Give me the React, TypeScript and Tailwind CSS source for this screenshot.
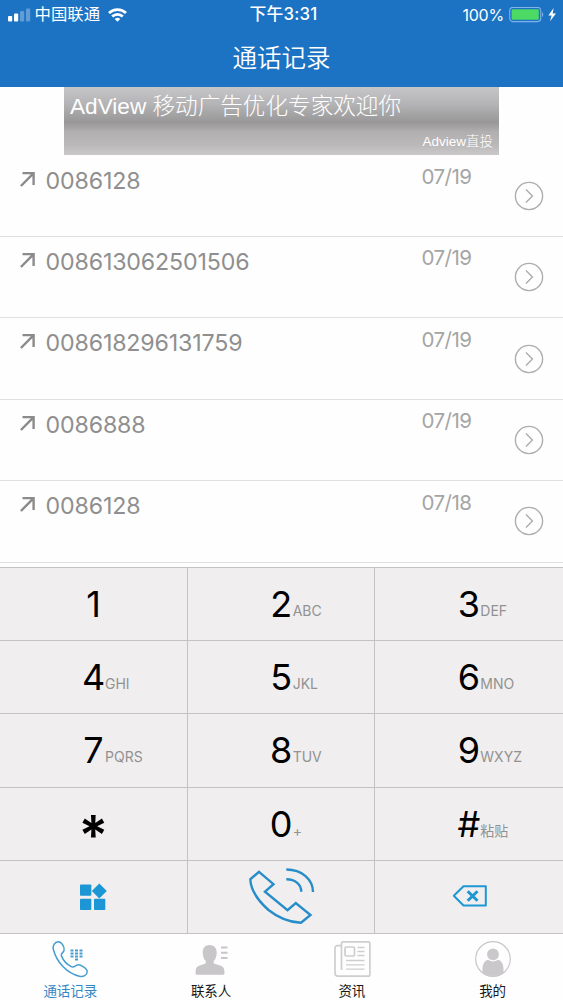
import type { ReactNode } from 'react'

interface Call {
  number: string
  date: string
}

interface Key {
  digit: string
  letters?: string
}

const CALLS: Call[] = [
  { number: '0086128', date: '07/19' },
  { number: '008613062501506', date: '07/19' },
  { number: '008618296131759', date: '07/19' },
  { number: '0086888', date: '07/19' },
  { number: '0086128', date: '07/18' },
]

const KEYS: Key[] = [
  { digit: '1' },
  { digit: '2', letters: 'ABC' },
  { digit: '3', letters: 'DEF' },
  { digit: '4', letters: 'GHI' },
  { digit: '5', letters: 'JKL' },
  { digit: '6', letters: 'MNO' },
  { digit: '7', letters: 'PQRS' },
  { digit: '8', letters: 'TUV' },
  { digit: '9', letters: 'WXYZ' },
  { digit: '*' },
  { digit: '0', letters: '+' },
  { digit: '#', letters: '粘贴' },
]

function StatusBar() {
  return (
    <div className="grid h-[29px] grid-cols-3 items-center text-[16.4px] leading-none">
      <div className="flex items-center pl-2">
        <svg className="h-3.5 w-[23px] shrink-0" viewBox="0 0 23 14" fill="#fff">
          <rect x="0" y="8" width="4.2" height="5.4" rx="1" />
          <rect x="6" y="5.5" width="4.2" height="7.9" rx="1" />
          <rect x="12" y="3" width="4.2" height="10.4" rx="1" opacity=".3" />
          <rect x="18" y="0.5" width="4.2" height="12.9" rx="1" opacity=".3" />
        </svg>
        <span className="ml-[3.5px] whitespace-nowrap">中国联通</span>
        <svg className="ml-2 h-3.5 w-[19px] shrink-0" viewBox="0 0 19 14" fill="none" stroke="#fff" strokeWidth="2.8">
          <path d="M1 5.1a12.2 12.2 0 0 1 17 0" />
          <path d="M4.2 8.6a7.6 7.6 0 0 1 10.6 0" />
          <path d="M9.5 13.8 6.7 11a4 4 0 0 1 5.6 0z" fill="#fff" stroke="none" />
        </svg>
      </div>
      <div className="pl-1 text-center text-[16.8px] font-medium tracking-[0.2px] whitespace-nowrap">下午3:31</div>
      <div className="flex items-center justify-end pr-[7px]">
        <span className="text-[16px] tracking-[-0.2px]">100%</span>
        <svg className="ml-[5px] h-4 w-[47px] shrink-0" viewBox="0 0 47 16" fill="none">
          <rect x=".7" y=".4" width="31" height="14.2" rx="3" stroke="#7db2ea" strokeWidth="1.1" />
          <rect x="2.6" y="2.2" width="27.2" height="10.6" rx="1.2" fill="#4cd964" />
          <path d="M33 5.2c1.6.5 1.6 4.1 0 4.6z" fill="#7db2ea" />
          <path d="M44.6.9 39.4 8.5h3.2l-1.6 5.8L47 6.5h-3.3z" fill="#fff" />
        </svg>
      </div>
    </div>
  )
}

function CallRow({ call }: { call: Call }) {
  return (
    <div className="flex h-[81.4px] border-b border-[#e0e0e0] pr-[19px] pl-5">
      <svg className="mt-[15px] h-4 w-4 shrink-0" viewBox="0 0 16 16" fill="none" stroke="#8b8b8b" strokeWidth="2.4">
        <path d="M2.5 2.1h11.1v12M13.4 2.3.9 15" />
      </svg>
      <span className="mt-[11px] ml-[9.5px] text-[23.2px] leading-7 font-[380] tracking-[-0.15px] text-[#8f8f8f]">
        {call.number}
      </span>
      <span className="mt-[7.5px] ml-auto text-[20.5px] leading-7 font-[380] tracking-[-0.5px] text-[#a5a5a5]">
        {call.date}
      </span>
      <svg className="ml-[42.5px] h-[30px] w-[30px] shrink-0 self-center" viewBox="0 0 30 30" fill="none" stroke="#adadad" strokeWidth="1.4">
        <circle cx="15" cy="15" r="13.6" />
        <path d="m12 8.500 6.400 6.500-6.400 6.500" />
      </svg>
    </div>
  )
}

function PadCell({ children }: { children: ReactNode }) {
  return <div className="flex border-r border-b border-[#c4c3c4] nth-[3n]:border-r-0">{children}</div>
}

function DialKey({ item }: { item: Key }) {
  if (item.digit === '*') {
    return (
      <PadCell>
        <span className="h-[72px] w-full pt-[22px] text-center text-[55px] leading-[50px] font-semibold text-black">*</span>
      </PadCell>
    )
  }
  return (
    <PadCell>
      <div className="flex w-full items-baseline pt-[14px] pl-[82px] leading-[44px]">
        <span className="w-[23px] shrink-0 text-center text-[36px] whitespace-nowrap text-black">{item.digit}</span>
        <span className="-translate-y-px text-[14px] font-[380] text-[#929292]">{item.letters}</span>
      </div>
    </PadCell>
  )
}

function Tab({ label, active, children }: { label: string; active?: boolean; children: ReactNode }) {
  return (
    <div className={`flex flex-col items-center pt-[5px] text-[13.5px] leading-5 ${active ? 'text-[#3588c5]' : 'text-[#181818]'}`}>
      <svg className="h-10 w-10" viewBox="0 0 40 40" fill="none">
        {children}
      </svg>
      <span className="mt-0.5">{label}</span>
    </div>
  )
}

export default function App() {
  return (
    <div className="flex h-[1000px] w-[563px] flex-col overflow-hidden bg-[#fefefe] font-['Inter','Noto_Sans_CJK_SC',sans-serif]">
      <header className="h-[87px] shrink-0 bg-[#1c72c3] text-white">
        <StatusBar />
        <h1 className="mt-[11px] text-center text-[24.5px] leading-9 font-[350]">通话记录</h1>
      </header>

      <div className="mx-auto flex h-[68px] w-[435px] shrink-0 flex-col justify-between bg-[linear-gradient(#c6c6c8_0%,#b4b3b5_25%,#999798_52%,#b1afb0_66%,#bab8b9_85%,#cac8c9_100%)] px-1.5 font-['Liberation_Sans','Noto_Sans_CJK_SC',sans-serif] text-white">
        <p className="pt-1 text-[22.6px] leading-8 font-light whitespace-nowrap">AdView 移动广告优化专家欢迎你</p>
        <p className="pb-[3px] text-right text-[13.5px] leading-5 font-light">Adview直投</p>
      </div>

      <main className="min-h-0 flex-1 overflow-hidden pt-[0.6px]">
        {CALLS.map((call, i) => (
          <CallRow key={i} call={call} />
        ))}
      </main>

      <section className="grid h-[367px] shrink-0 grid-cols-3 grid-rows-5 border-t border-[#c4c3c4] bg-[#f0eeef]">
        {KEYS.map(item => (
          <DialKey key={item.digit} item={item} />
        ))}
        <PadCell>
          <svg className="m-auto h-7 w-7" viewBox="0 0 28 28" fill="#1c96d4">
            <rect x="1" y="1.5" width="11.3" height="11.3" rx=".8" />
            <rect x="1" y="15.7" width="11.3" height="11.3" rx=".8" />
            <rect x="15" y="15.7" width="11.3" height="11.3" rx=".8" />
            <path d="m20.3.4 7.5 7.5-7.5 7.5-7.5-7.5z" />
          </svg>
        </PadCell>
        <PadCell>
          <svg className="m-auto h-[60px] w-[68px]" viewBox="0 0 68 60" fill="none" stroke="#278dc9" strokeWidth="2.4">
            <path d="m12 4.8 14.5 12.4-8.5 7.5 22.500 18.500 8.300-7.200L63.500 48 54 55.800Q36.500 55 21.500 43 4 27.500 3.300 12.300z" />
            <path d="M39.300 2.500C55 2.500 66 12.500 66 25M39.300 12.300c9.200 0 15 5.200 15 12.500" />
          </svg>
        </PadCell>
        <PadCell>
          <svg className="m-auto h-6 w-9" viewBox="0 0 36 24" fill="none" stroke="#1f97d5" strokeWidth="2">
            <path d="M12.500 1.200h22.300v19.300H12.500L2.800 10.800z" strokeLinejoin="round" />
            <path d="m16.700 6.200 9.800 9.600M26.500 6.200l-9.800 9.600" strokeWidth="3" />
          </svg>
        </PadCell>
      </section>

      <nav className="grid h-[66px] shrink-0 grid-cols-4">
        <Tab label="通话记录" active>
          <path
            d="M8 2.700C4.500 3.300 2.400 6.500 3.400 10.500 6.500 23 17 34.500 29.500 37.300c4 .8 7.500-1 7.700-4.800.1-3-7-7.300-9.800-6.600-2.600.7-3.400 3-6.100 1.700-4.500-2.200-8.200-6.500-10-11-.7-2.200 2.300-3.100 2.800-5.300C14.700 8 11.500 2.200 8 2.700z"
            stroke="#449dd1"
            strokeWidth="1.500"
          />
          <path d="M20.500 11.500h3m1.500 0h3m1.500 0h3M20.500 14.500h3m1.500 0h3m1.500 0h3M20.500 17.500h3m1.500 0h3m1.500 0h3M25 20.500h3" stroke="#449dd1" strokeWidth="2" />
        </Tab>
        <Tab label="联系人">
          <g fill="#c8c6c8">
            <path d="M18.500 6c5 0 7.600 3.500 7.200 8.500-.3 3.300-1.300 5.900-3 7.600v2.200c4 2 10 1.800 10.500 6.500l.3 3.800c0 .7-.5 1.200-1.200 1.200H5.700c-.8 0-1.300-.5-1.200-1.200l.3-3.800c.5-4.700 6.500-4.500 10-6.500v-2.200c-1.700-1.700-2.800-4.300-3-7.600-.4-5 2-8.500 6.700-8.500z" />
            <path d="M30 7.500h6.500v2H30zM30 12.700h6.500v2H30zM30 17.900h6.500v2H30z" />
          </g>
        </Tab>
        <Tab label="资讯">
          <g stroke="#cfcdcf" strokeWidth="1.700">
            <path d="M9.500 31V4.500c0-1 .7-1.700 1.700-1.700h25c1 0 1.700.7 1.700 1.700v31c0 1-.7 1.700-1.700 1.700H6c-2 0-3-1.200-3-3V9c0-1.500 1-2.300 2.500-2.300h4" />
            <rect x="13" y="8" width="9.500" height="9" rx="1.200" />
            <path d="M25.500 8.500h7M25.500 12.500h7M25.500 16.500h7M14 21.500h18.500M14 25.800h18.500M14 30.200h18.500" strokeWidth="1.300" />
          </g>
        </Tab>
        <Tab label="我的">
          <circle cx="20" cy="20" r="17.300" stroke="#c8c6c8" strokeWidth="1.200" />
          <circle cx="20" cy="15.300" r="5.900" fill="#cac8ca" />
          <path d="M9.500 33.500c-.5-7 1.300-12 5.700-12.700 3 2.200 6.600 2.200 9.600 0 4.400.7 6.200 5.700 5.700 12.700-6 4.500-15 4.500-21 0z" fill="#cac8ca" />
        </Tab>
      </nav>
    </div>
  )
}
